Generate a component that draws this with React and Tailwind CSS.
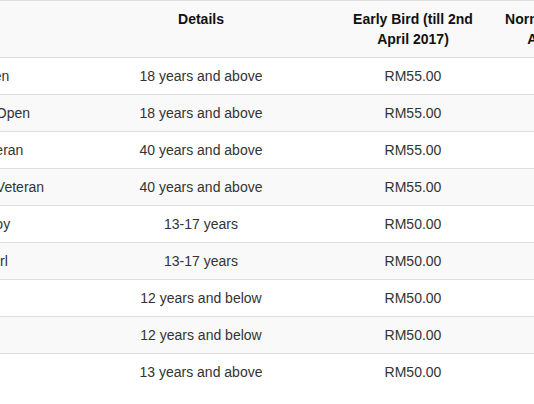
const rows = [
  { category: 'Men Open', details: '18 years and above', early: 'RM55.00', normal: 'RM65.00' },
  { category: 'Women Open', details: '18 years and above', early: 'RM55.00', normal: 'RM65.00' },
  { category: 'Men Veteran', details: '40 years and above', early: 'RM55.00', normal: 'RM65.00' },
  { category: 'Women Veteran', details: '40 years and above', early: 'RM55.00', normal: 'RM65.00' },
  { category: 'Junior Boy', details: '13-17 years', early: 'RM50.00', normal: 'RM60.00' },
  { category: 'Junior Girl', details: '13-17 years', early: 'RM50.00', normal: 'RM60.00' },
  { category: 'Kids', details: '12 years and below', early: 'RM50.00', normal: 'RM60.00' },
  { category: 'Kids', details: '12 years and below', early: 'RM50.00', normal: 'RM60.00' },
  { category: 'Fun', details: '13 years and above', early: 'RM50.00', normal: 'RM60.00' },
];

const App = () => {
  return (
    <div className="w-[534px] h-[404px] overflow-hidden bg-white font-['Liberation_Sans',Arial,sans-serif] text-[14px] leading-[20px] text-[#333]">
      <table className="table-fixed w-[702px] ml-[-64px] border-t border-[#ddd]">
        <colgroup>
          <col className="w-[128px]" />
          <col className="w-[274px]" />
          <col className="w-[150px]" />
          <col className="w-[150px]" />
        </colgroup>
        <thead>
          <tr className="bg-[#f9f9f9] border-b border-[#ddd]">
            <th className="p-2 text-left font-bold text-[#111] align-top">Race</th>
            <th className="p-2 text-center font-bold text-[#111] align-top">Details</th>
            <th className="p-2 text-center font-bold text-[#111] align-top">Early Bird (till 2nd April 2017)</th>
            <th className="p-2 text-center font-bold text-[#111] align-top">Normal (after 2nd April 2017)</th>
          </tr>
        </thead>
        <tbody>
          {rows.map((row, i) => (
            <tr
              key={i}
              className={`${i > 0 ? 'border-t border-[#ddd]' : ''} ${i % 2 === 1 ? 'bg-[#f9f9f9]' : 'bg-white'}`}
            >
              <td className="p-2 text-left whitespace-nowrap">{row.category}</td>
              <td className="p-2 text-center">{row.details}</td>
              <td className="p-2 text-center">{row.early}</td>
              <td className="p-2 text-center">{row.normal}</td>
            </tr>
          ))}
        </tbody>
      </table>
    </div>
  );
};

export default App;
